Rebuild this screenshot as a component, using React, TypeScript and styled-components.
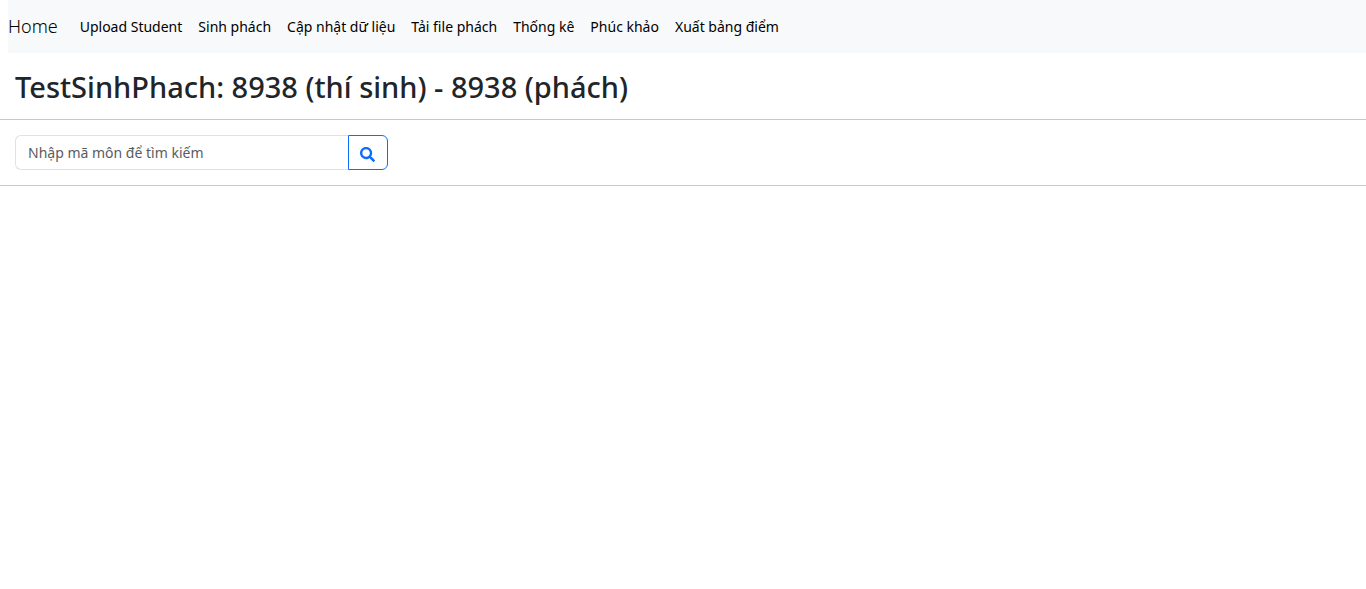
import React from 'react';
import styled, { createGlobalStyle } from 'styled-components';
import { FaSearch } from 'react-icons/fa';

const GlobalStyle = createGlobalStyle`
  *, *::before, *::after { box-sizing: border-box; }
  body {
    margin: 0;
    background: #fff;
    color: #212529;
    font-family: "Segoe UI", "Noto Sans", "Open Sans", sans-serif;
    font-size: 14px;
    line-height: 23px;
  }
`;

const Navbar = styled.nav`
  display: flex;
  align-items: center;
  min-height: 53px;
  margin-left: 8px;
  background: #f8f9fa;
`;

const Brand = styled.a`
  margin-right: 14px;
  padding-bottom: 2px;
  color: #000;
  font-size: 18px;
  font-weight: 300;
  line-height: 26px;
  text-decoration: none;
`;

const NavList = styled.ul`
  display: flex;
  margin: 0;
  padding: 0;
  list-style: none;
`;

const NavLink = styled.a`
  display: block;
  padding: 8px;
  color: #000;
  text-decoration: none;
`;

const Title = styled.h2`
  margin: 0;
  padding: 17px 15px 15px;
  font-size: 29px;
  font-weight: 500;
  line-height: 34px;
`;

const SearchForm = styled.form`
  display: flex;
  padding: 15px;
  border: solid #c8c9ca;
  border-width: 1px 0;
`;

const SearchInput = styled.input`
  width: 333px;
  height: 35px;
  padding: 6px 12px;
  border: 1px solid #dee2e6;
  border-right: 0;
  border-radius: 6px 0 0 6px;
  background: #fff;
  color: #212529;
  font: inherit;
  &::placeholder { color: #595c5f; opacity: 1; }
`;

const SearchButton = styled.button`
  display: flex;
  align-items: center;
  justify-content: center;
  width: 40px;
  height: 35px;
  padding: 3px 2px 0 0;
  border: 1px solid #0d6efd;
  border-radius: 0 6px 6px 0;
  background: #fff;
  color: #0d6efd;
  cursor: pointer;
`;

const links = [
  'Upload Student',
  'Sinh phách',
  'Cập nhật dữ liệu',
  'Tải file phách',
  'Thống kê',
  'Phúc khảo',
  'Xuất bảng điểm',
];

export default function App() {
  return (
    <>
      <GlobalStyle />
      <Navbar>
        <Brand href="#">Home</Brand>
        <NavList>
          {links.map((label) => (
            <li key={label}><NavLink href="#">{label}</NavLink></li>
          ))}
        </NavList>
      </Navbar>
      <main>
        <Title>TestSinhPhach: 8938 (thí sinh) - 8938 (phách)</Title>
        <SearchForm role="search" onSubmit={(e) => e.preventDefault()}>
          <SearchInput type="text" aria-label="Nhập mã môn để tìm kiếm" placeholder="Nhập mã môn để tìm kiếm" />
          <SearchButton type="submit" aria-label="Tìm kiếm"><FaSearch size={15} /></SearchButton>
        </SearchForm>
      </main>
    </>
  );
}
